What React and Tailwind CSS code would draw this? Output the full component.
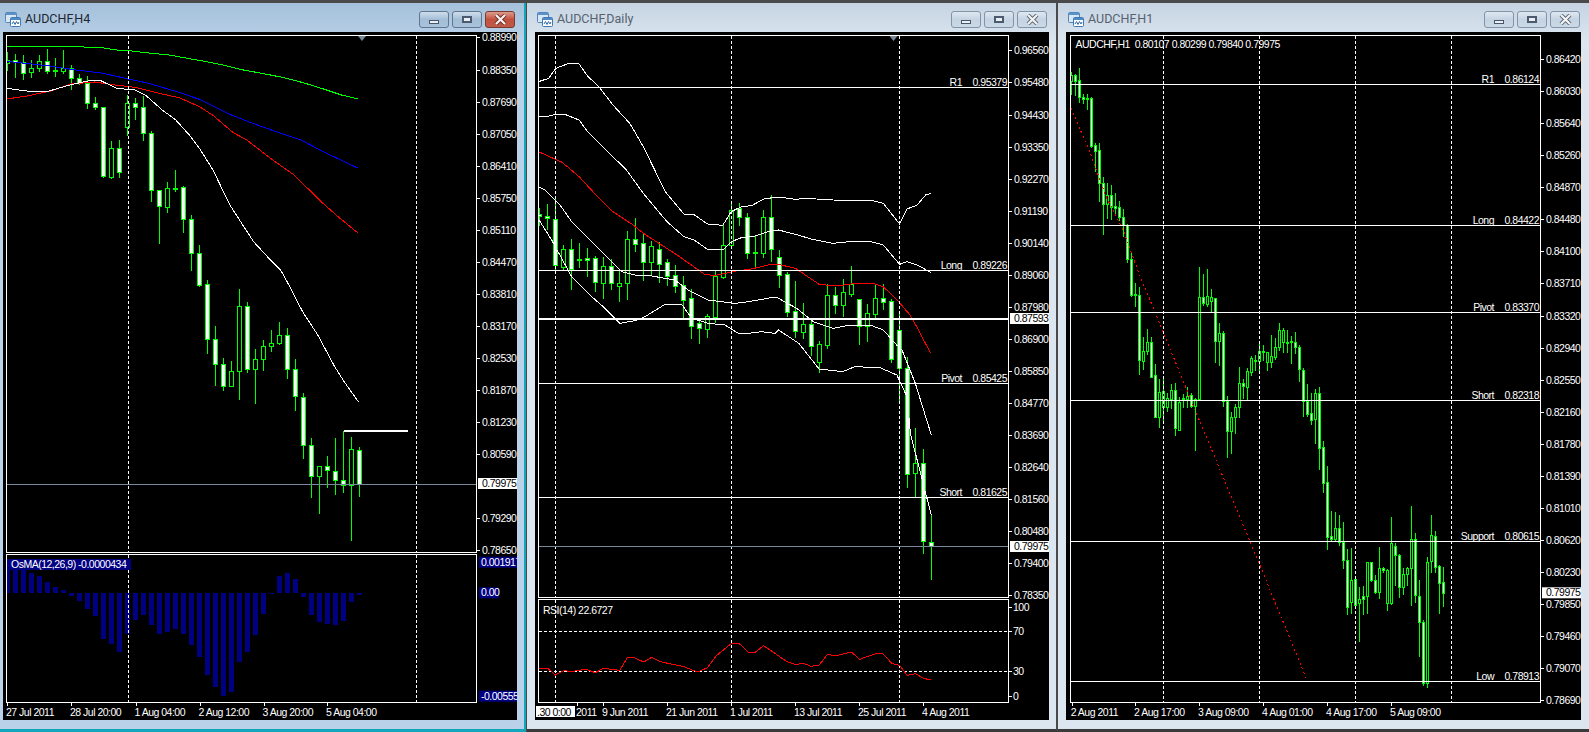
// MT4 style chart windows. Chart data is kept in page pixels (read off the chart)
const GREEN = '#00ff00'

// zoomed readings -> page pixels
const d3 = (pts) => pts.map(([x, y]) => [525 + x / 2.958, y / 3])
const d4 = (pts) => pts.map(([x, y]) => [525 + x / 2.958, 300 + y / 3])
const d11 = (pts) => pts.map(([x, y]) => [535 + x / 3, 190 + y / 3])
const d12 = (pts) => pts.map(([x, y]) => [770 + x / 3, 190 + y / 3])
const h4pt = (pts) => pts.map(([x, y]) => [x / 2.958, y / 3])
const h1pt = (pts) => pts.map(([x, y]) => [1055 + x / 2.936, y / 3])

// [high, bodyTop, bodyBottom, low, bearish]
const h4Candles = [
  [155, 180, 190, 210, 0], [162, 181, 187, 232, 1], [165, 187, 220, 236, 1], [181, 205, 217, 230, 0], [165, 182, 205, 212, 0],
  [147, 182, 212, 218, 1], [175, 210, 212, 228, 0], [150, 205, 212, 218, 0], [195, 205, 235, 268, 1], [222, 235, 248, 252, 1],
  [228, 248, 310, 323, 1], [292, 310, 322, 328, 1], [320, 322, 528, 532, 1], [424, 445, 530, 533, 0], [420, 445, 517, 530, 1],
  [285, 310, 380, 405, 0], [295, 310, 322, 357, 1], [288, 322, 400, 420, 1], [393, 400, 571, 602, 1], [571, 571, 619, 728, 1],
  [546, 565, 620, 636, 0], [510, 563, 566, 572, 1], [558, 562, 658, 696, 1], [645, 658, 760, 810, 1], [735, 758, 855, 857, 1],
  [840, 853, 1018, 1058, 1], [978, 1018, 1093, 1155, 1], [1075, 1091, 1157, 1170, 1], [1083, 1114, 1157, 1157, 0], [867, 919, 1114, 1196, 0],
  [906, 919, 1108, 1116, 1], [1047, 1078, 1108, 1208, 0], [1020, 1037, 1078, 1110, 0], [990, 1028, 1037, 1052, 0], [966, 1006, 1028, 1032, 0],
  [985, 1006, 1108, 1133, 1], [1077, 1108, 1189, 1229, 1], [1180, 1192, 1336, 1374, 1], [1314, 1336, 1429, 1490, 1], [1397, 1397, 1427, 1538, 0],
  [1368, 1397, 1411, 1460, 1], [1314, 1412, 1441, 1481, 1], [1294, 1441, 1456, 1475, 1], [1312, 1348, 1456, 1619, 0], [1341, 1351, 1453, 1487, 1],
]

const dailyCandles = [
  [55, 71, 79, 105, 1], [42, 79, 85, 118, 1], [18, 88, 226, 248, 1], [165, 178, 231, 238, 0], [148, 178, 236, 296, 1],
  [158, 208, 208, 232, 0], [175, 205, 209, 258, 1], [198, 205, 275, 303, 1], [202, 229, 278, 323, 0], [208, 229, 278, 297, 1],
  [236, 278, 287, 332, 0], [123, 148, 278, 326, 0], [85, 148, 161, 183, 1], [130, 160, 215, 270, 1], [153, 169, 215, 252, 0],
  [157, 178, 221, 275, 1], [208, 217, 258, 285, 1], [225, 256, 287, 305, 1], [258, 286, 329, 388, 1], [296, 325, 407, 444, 1],
  [390, 400, 415, 458, 1], [372, 379, 416, 441, 0], [242, 259, 381, 395, 0], [100, 166, 260, 263, 0], [33, 61, 166, 166, 0],
  [40, 55, 80, 105, 1], [70, 80, 188, 204, 1], [138, 186, 188, 232, 0], [60, 82, 188, 200, 0], [15, 82, 178, 213, 1],
  [180, 202, 254, 290, 1], [246, 253, 365, 378, 1], [273, 364, 422, 442, 1], [340, 403, 425, 443, 0], [390, 403, 467, 494, 1],
  [453, 463, 515, 545, 0], [282, 316, 464, 473, 0], [292, 316, 344, 368, 1], [267, 307, 344, 378, 0], [228, 283, 311, 318, 0],
  [328, 328, 407, 462, 1], [342, 370, 407, 453, 0], [283, 325, 371, 387, 0], [282, 325, 335, 358, 1], [327, 333, 506, 515, 1],
  [363, 421, 535, 639, 1], [502, 535, 853, 890, 1], [715, 818, 850, 922, 0], [778, 818, 1054, 1090, 1], [975, 1055, 1069, 1168, 1],
]

const h1Top = [
  [215, 225, 243, 282, 0], [222, 226, 243, 285, 1], [205, 240, 292, 305, 1], [282, 292, 298, 310, 1], [282, 294, 297, 326, 1],
  [292, 295, 438, 442, 1], [428, 436, 452, 512, 1], [430, 451, 548, 602, 1], [532, 550, 613, 702, 1], [549, 586, 613, 654, 0],
  [555, 586, 620, 657, 1], [580, 619, 623, 640, 1], [603, 622, 650, 660, 1], [627, 650, 675, 708, 1], [672, 675, 778, 785, 1],
  [756, 778, 884, 888, 1], [850, 883, 886, 918, 1], [862, 884, 1080, 1122, 1],
]
const h1Rest = [
  [112, 152, 182, 208, 0], [88, 127, 152, 162, 0], [112, 127, 230, 232, 1], [193, 226, 350, 352, 1], [238, 277, 350, 380, 0],
  [238, 274, 320, 365, 0], [280, 295, 320, 333, 0], [252, 270, 297, 325, 0], [250, 270, 383, 405, 1], [292, 307, 389, 389, 0],
  [282, 295, 297, 320, 1], [262, 287, 298, 320, 0], [280, 286, 318, 322, 1], [295, 297, 318, 450, 0], [-100, -10, 297, 300, 0],
  [-78, -10, 10, 15, 1], [-93, -12, 12, 18, 0], [-33, -10, 3, 33, 0], [-5, -5, 122, 185, 1], [70, 100, 122, 195, 0],
  [93, 100, 304, 318, 1], [288, 303, 392, 470, 1], [335, 352, 392, 458, 0], [312, 322, 352, 398, 0], [200, 250, 322, 352, 0],
  [238, 250, 257, 295, 1], [205, 214, 260, 297, 0], [168, 174, 215, 225, 0], [165, 179, 182, 210, 1], [122, 152, 182, 212, 0],
  [135, 152, 157, 180, 1], [155, 157, 185, 210, 0], [105, 168, 185, 200, 0], [115, 142, 170, 177, 0], [70, 91, 142, 150, 0],
  [85, 90, 127, 155, 0], [90, 126, 130, 155, 1], [108, 124, 127, 190, 1], [97, 125, 142, 160, 1], [135, 142, 208, 243, 1],
  [205, 210, 304, 348, 1], [252, 304, 342, 347, 1], [280, 340, 360, 372, 1], [268, 280, 358, 430, 0], [260, 280, 444, 508, 1],
  [424, 442, 548, 576, 1], [498, 545, 712, 746, 1], [633, 708, 716, 720, 1], [635, 684, 716, 722, 0], [645, 684, 726, 735, 1],
  [667, 726, 780, 803, 1], [747, 780, 922, 942, 1], [745, 840, 906, 938, 0], [835, 838, 914, 918, 1], [860, 898, 910, 1022, 0],
  [857, 889, 898, 942, 1], [785, 787, 888, 938, 0], [785, 787, 840, 843, 1], [825, 840, 875, 880, 1], [742, 805, 875, 893, 0],
  [800, 805, 810, 815, 1], [808, 810, 910, 930, 0], [652, 730, 910, 912, 0], [730, 737, 766, 855, 1], [762, 765, 862, 890, 1],
  [805, 822, 862, 883, 0], [800, 805, 823, 855, 0], [618, 718, 805, 915, 0], [700, 718, 886, 905, 1], [840, 888, 966, 1068, 1],
  [960, 966, 1150, 1155, 1], [770, 787, 1150, 1160, 0], [645, 706, 782, 815, 0], [692, 709, 800, 815, 1], [795, 798, 848, 938, 1],
  [800, 847, 880, 918, 1],
]
const h1Candles = [...h1Top, ...h1Rest.map((c) => c.map((v, i) => (i === 4 ? v : v + 900)))]

const h4Lines = [
  { color: '#00ff00', pts: h4pt([[20, 139], [155, 139], [295, 142], [345, 150], [390, 153], [440, 159], [500, 165], [560, 176], [600, 183], [660, 195], [720, 210], [780, 221], [840, 233], [900, 249], [960, 268], [1010, 285], [1060, 297]]) },
  { color: '#0000ff', pts: h4pt([[20, 184], [140, 197], [225, 210], [300, 219], [380, 237], [440, 250], [520, 274], [590, 298], [680, 343], [740, 367], [800, 389], [890, 420], [960, 457], [1060, 505]]) },
  { color: '#ff0000', pts: h4pt([[20, 297], [80, 288], [150, 273], [210, 252], [280, 246], [340, 255], [400, 262], [470, 280], [530, 293], [590, 320], [630, 346], [690, 398], [730, 420], [800, 475], [870, 525], [950, 605], [1000, 650], [1060, 700]]) },
  { color: '#ffffff', pts: h4pt([[20, 265], [80, 273], [145, 273], [210, 254], [270, 241], [300, 243], [345, 265], [400, 270], [430, 285], [480, 330], [520, 360], [560, 405], [590, 445], [630, 510], [680, 615], [750, 725], [800, 780], [830, 810], [860, 865], [895, 935], [940, 1005], [990, 1100], [1020, 1148], [1060, 1205]]) },
]

const dailyLines = [
  { color: '#ffffff', pts: d3([[40, 245], [70, 235], [91, 205], [130, 190], [160, 192], [185, 228], [220, 262], [260, 315], [310, 370], [350, 440], [415, 575], [470, 642], [500, 644], [540, 672], [585, 676], [610, 635], [640, 620], [670, 617], [710, 595], [760, 592], [800, 598], [830, 595], [910, 600], [1025, 601], [1060, 610], [1108, 672], [1130, 627], [1160, 615], [1185, 585], [1200, 580]]) },
  { color: '#ffffff', pts: d3([[40, 348], [60, 351], [90, 343], [120, 344], [160, 360], [185, 395], [250, 460], [300, 510], [350, 580], [420, 665], [470, 710], [500, 720], [540, 748], [585, 750], [610, 725], [640, 713], [680, 708], [720, 695], [750, 690], [800, 703], [850, 718], [910, 730], [960, 725], [1020, 724], [1060, 735], [1108, 793], [1130, 785], [1160, 795], [1200, 817]]) },
  { color: '#ffffff', pts: [...d11([[10, -10], [30, 0], [75, 45], [110, 95], [140, 125], [200, 185], [260, 245], [300, 255], [350, 258], [420, 270], [460, 300], [520, 330], [560, 335], [600, 340], [640, 335], [700, 325]]), ...d12([[0, 322], [20, 322], [80, 355], [130, 395], [190, 415], [240, 405], [300, 405], [340, 420], [380, 465], [396, 480], [436, 580], [484, 735]])] },
  { color: '#ffffff', pts: [...d11([[12, 90], [50, 150], [110, 260], [170, 320], [210, 355], [255, 400], [300, 392], [330, 380], [390, 343], [440, 343], [470, 385], [520, 400], [570, 405], [610, 430], [640, 430], [680, 425], [720, 430]]), ...d4([[750, 90], [810, 130], [870, 207], [940, 215], [975, 200], [1050, 203], [1100, 225], [1130, 290], [1140, 400], [1180, 560], [1202, 645]])] },
  { color: '#ff0000', pts: [...d3([[40, 455], [110, 487], [160, 530], [210, 585], [260, 635], [320, 675], [350, 700], [450, 765], [530, 822], [560, 827], [630, 812], [665, 808], [720, 795], [745, 792], [800, 805], [870, 853], [920, 858], [980, 850], [1030, 850], [1060, 860], [1100, 900]]), ...d12([[390, 340], [420, 375], [440, 410], [482, 490]])] },
]

const rsiLine = d4([[40, 1105], [68, 1106], [90, 1125], [115, 1111], [135, 1115], [180, 1108], [208, 1118], [232, 1105], [280, 1111], [303, 1072], [325, 1074], [351, 1086], [375, 1072], [400, 1085], [470, 1100], [510, 1116], [540, 1103], [565, 1068], [611, 1030], [635, 1032], [660, 1056], [682, 1056], [706, 1037], [775, 1085], [800, 1094], [822, 1090], [847, 1099], [870, 1095], [895, 1063], [918, 1068], [965, 1056], [990, 1078], [1040, 1060], [1060, 1062], [1085, 1090], [1108, 1096], [1130, 1126], [1155, 1121], [1180, 1136], [1202, 1139]])

const h1Trend = [...h1pt([[47, 325], [100, 450], [150, 590], [200, 690], [250, 830], [275, 890]]), [1150, 300], [1196.3, 413], [1259, 563], [1307, 680]]

// bar end y for each OsMA bar, zero line at 999
const osmaBars = [918, 918, 918, 940, 948, 966, 982, 990, 1007, 1024, 1047, 1068, 1138, 1152, 1176, 1121, 1080, 1066, 1096, 1122, 1116, 1108, 1122, 1156, 1192, 1246, 1281, 1308, 1296, 1206, 1176, 1126, 1062, 1001, 948, 940, 957, 1011, 1066, 1086, 1092, 1096, 1084, 1026, 1005]

const label = "font-['Liberation_Sans',Arial,sans-serif] text-[10.5px] tracking-[-0.5px]"

function Candles({ data, x0, step, half }) {
  return data.map(([hi, top, bot, lo, bear], i) => {
    const x = x0 + step * i
    const t = Math.round(top / 3)
    const b = Math.round(bot / 3)
    return (
      <g key={i} shapeRendering="crispEdges">
        <line x1={x} x2={x} y1={Math.round(hi / 3)} y2={Math.round(lo / 3) + 1} stroke={GREEN} />
        <rect x={x - half} y={t + 0.5} width={half * 2} height={Math.max(b - t, 1)} fill={bear ? '#fff' : '#000'} stroke={GREEN} />
      </g>
    )
  })
}

function Poly({ pts, color = '#fff', dash }) {
  return <polyline points={pts.map((p) => p.join(',')).join(' ')} fill="none" stroke={color} strokeDasharray={dash} shapeRendering="crispEdges" />
}

function VLines({ xs, y1, y2 }) {
  return xs.map((x) => <line key={x} x1={x} x2={x} y1={y1} y2={y2} stroke="#fff" strokeDasharray="3 2" shapeRendering="crispEdges" />)
}

function Level({ y, name, value, x1, x2, nameEnd, valueEnd, width = 1, color = '#fff' }) {
  return (
    <g>
      <line x1={x1} x2={x2} y1={y} y2={y} stroke={color} strokeWidth={width} shapeRendering="crispEdges" />
      {name && <text x={nameEnd} y={y - 2} textAnchor="end" fill="#fff" className={label}>{name}</text>}
      {value && <text x={valueEnd} y={y - 2} textAnchor="end" fill="#fff" className={label}>{value}</text>}
    </g>
  )
}

function Marker({ x, y = 36 }) {
  return <polygon points={`${x - 4},${y} ${x + 4},${y} ${x},${y + 5}`} fill="#778899" />
}

// pane with white frame, svg uses page pixels through the viewBox
function Pane({ x, y, h, children }) {
  return (
    <div className="border border-white w-[471px] bg-black" style={{ height: h }}>
      <svg width={469} height={h - 2} viewBox={`${x + 1} ${y + 1} 469 ${h - 2}`} className="block">
        {children}
      </svg>
    </div>
  )
}

function PriceAxis({ x, y, h, rows, textX }) {
  return (
    <svg width={40} height={h} viewBox={`${x} ${y} 40 ${h}`} className="block shrink-0 overflow-visible">
      {rows.map(({ v, at, box, navy, w }) => (
        <g key={v}>
          {!box && !navy && <line x1={x} x2={x + 3} y1={Math.round(at) + 0.5} y2={Math.round(at) + 0.5} stroke="#fff" shapeRendering="crispEdges" />}
          {box && <rect x={x + 1} y={at - 5} width={39} height={11} fill="#fff" />}
          {navy && <rect x={x + 2} y={at - 5} width={w} height={11} fill="#000080" />}
          <text x={textX} y={at + 4} fill={box ? '#000' : '#fff'} className={label}>{v}</text>
        </g>
      ))}
    </svg>
  )
}

function TimeAxis({ x, ticks, children }) {
  return (
    <svg width={510} height={17} viewBox={`${x} 703 510 17`} className="block overflow-visible">
      {ticks.map(([tx, text]) => (
        <g key={text}>
          <line x1={Math.round(tx) + 1.5} x2={Math.round(tx) + 1.5} y1={703} y2={706} stroke="#fff" shapeRendering="crispEdges" />
          <text x={tx} y={716} fill="#fff" className={label}>{text}</text>
        </g>
      ))}
      {children}
    </svg>
  )
}

function ChartIcon() {
  return (
    <svg width="16" height="15" viewBox="0 0 16 15" className="shrink-0">
      <rect x="0.5" y="0.5" width="11" height="10" rx="1" fill="#d9e6f3" stroke="#4f86bd" />
      <rect x="1" y="1" width="10" height="2" fill="#5b93c9" />
      <rect x="5.5" y="5.5" width="10" height="9" rx="1" fill="#fff" stroke="#3f78b3" />
      <rect x="6" y="6" width="9" height="2" fill="#4f8ac4" />
      <path d="M7 12 L8.5 9.5 L10 12.5 L11.5 9.5 L13 12 L14 10" fill="none" stroke="#2f6cab" />
    </svg>
  )
}

function WinButton({ kind, active }) {
  const close = kind === 'close' && active
  return (
    <div
      className={`w-[30px] h-[17px] rounded-[3px] border flex items-center justify-center ${
        close
          ? 'border-[#7a3a34] bg-gradient-to-b from-[#dc9a8e] via-[#c2503f] to-[#c05a48]'
          : active
            ? 'border-[#5f7690] bg-gradient-to-b from-[#cfdeec] via-[#a3bdd6] to-[#a9c3db]'
            : 'border-[#8294a8] bg-gradient-to-b from-[#dfe8f1] via-[#c5d4e2] to-[#cbd9e6]'
      }`}
    >
      {kind === 'min' && <div className="w-[10px] h-[4px] mt-[5px] bg-[#e9eff5] border border-[#47566a]" />}
      {kind === 'max' && <div className="w-[10px] h-[7px] border-2 border-[#4b5a6e] bg-[#e9eff5]" />}
      {kind === 'close' && (
        <svg width="13" height="11" viewBox="0 0 13 11">
          <path d="M2 1 L11 10 M11 1 L2 10" stroke={close ? '#6d2e28' : '#56667a'} strokeWidth="4" />
          <path d="M2 1 L11 10 M11 1 L2 10" stroke="#f6f3f1" strokeWidth="2.2" />
        </svg>
      )}
    </div>
  )
}

function ChartWindow({ title, active, className, titlePad, bodyPad, children }) {
  return (
    <section className={`flex flex-col h-[729px] mt-[3px] border-b-[3px] ${className}`}>
      <header className={`h-[29px] shrink-0 flex items-center pt-[4px] pr-[9px] ${titlePad}`}>
        <ChartIcon />
        <span className={`ml-[4px] text-[12.5px] font-['Roboto',sans-serif] ${active ? 'text-[#1c2733]' : 'text-[#56626e]'}`}>{title}</span>
        <div className="ml-auto flex gap-[3px]">
          <WinButton kind="min" active={active} />
          <WinButton kind="max" active={active} />
          <WinButton kind="close" active={active} />
        </div>
      </header>
      <div className={`h-[688px] bg-black pt-[3px] flex flex-col overflow-hidden ${bodyPad}`}>{children}</div>
    </section>
  )
}

const h4Axis = [
  [37, '0.88990'], [69.5, '0.88350'], [101.5, '0.87690'], [133.5, '0.87050'], [165.5, '0.86410'], [198, '0.85750'], [230, '0.85110'], [262, '0.84470'],
  [293.7, '0.83810'], [325.7, '0.83170'], [357.7, '0.82530'], [389.7, '0.81870'], [421.7, '0.81230'], [453.7, '0.80590'], [483, '0.79975', 1], [517.7, '0.79290'], [549.5, '0.78650'],
].map(([at, v, box]) => ({ at, v, box }))

const dailyAxis = [
  [50.3, '0.96560'], [82, '0.95480'], [114.7, '0.94430'], [146.7, '0.93350'], [178.7, '0.92270'], [210.7, '0.91190'], [242.7, '0.90140'], [274.7, '0.89060'], [306.7, '0.87980'],
  [318, '0.87593', 1], [338.7, '0.86900'], [370.7, '0.85850'], [402.7, '0.84770'], [434.7, '0.83690'], [466.7, '0.82640'], [498.7, '0.81560'], [530.7, '0.80480'], [546, '0.79975', 1], [562.7, '0.79400'], [594.7, '0.78350'],
].map(([at, v, box]) => ({ at, v, box }))

const h1Axis = [
  [59.3, '0.86420'], [91.3, '0.86030'], [123.3, '0.85640'], [155.3, '0.85260'], [187.3, '0.84870'], [219.3, '0.84480'], [251.3, '0.84100'], [283.3, '0.83710'], [315.7, '0.83320'], [347.7, '0.82940'], [379.7, '0.82550'],
  [411.7, '0.82160'], [443.7, '0.81780'], [475.7, '0.81390'], [507.7, '0.81010'], [539.7, '0.80620'], [571.7, '0.80230'], [592.3, '0.79975', 1], [603.7, '0.79850'], [635.7, '0.79460'], [667.7, '0.79070'], [699.7, '0.78690'],
].map(([at, v, box]) => ({ at, v, box }))

export default function App() {
  return (
    <div className="w-[1589px] h-[732px] bg-[#4a4a4a] flex overflow-hidden">
      {/* H4, the active window */}
      <ChartWindow
        title="AUDCHF,H4"
        active
        titlePad="pl-[5px]"
        bodyPad="w-[514px] ml-[3px] pl-[3px]"
        className="w-[526px] mr-[1px] border-r-2 border-[#12a6ba] bg-gradient-to-b from-[#a5c0da] to-[#bad2e9] [background-size:100%_40px] bg-no-repeat bg-[#bad2e9]"
      >
        <div className="flex">
          <Pane x={6} y={35} h={518}>
            <Candles data={h4Candles} x0={7.5} step={8} half={2} />
            {h4Lines.map((l) => <Poly key={l.color} pts={l.pts} color={l.color} />)}
            <VLines xs={[128.5, 416.5]} y1={36} y2={552} />
            <Marker x={362} />
            <line x1={344} x2={408} y1={431} y2={431} stroke="#fff" strokeWidth="2" shapeRendering="crispEdges" />
            <Level y={484.5} x1={7} x2={476} color="#778899" />
          </Pane>
          <PriceAxis x={477} y={35} h={518} textX={482} rows={h4Axis} />
        </div>
        <div className="flex mt-[1px]">
          <Pane x={6} y={554} h={149}>
            {osmaBars.map((end, i) => {
              const y = 260 + end / 3
              const top = Math.min(y, 593)
              return <rect key={i} x={5 + 8 * i} y={top} width={5} height={Math.abs(y - 593)} fill="#000080" shapeRendering="crispEdges" />
            })}
            <VLines xs={[128.5, 416.5]} y1={555} y2={702} />
            <rect x={7} y={559} width={124} height={11} fill="#000080" />
            <text x={11} y={568} fill="#fff" className={label}>OsMA(12,26,9) -0.0000434</text>
          </Pane>
          <PriceAxis
            x={477}
            y={554}
            h={149}
            textX={481}
            rows={[
              { at: 561.7, v: '0.001917', navy: true, w: 38 },
              { at: 592.3, v: '0.00', navy: true, w: 20 },
              { at: 695.7, v: '-0.00555', navy: true, w: 38 },
            ]}
          />
        </div>
        <TimeAxis x={6} ticks={[[6, '27 Jul 2011'], [70, '28 Jul 20:00'], [134.5, '1 Aug 04:00'], [198.5, '2 Aug 12:00'], [262.5, '3 Aug 20:00'], [326, '5 Aug 04:00']]} />
      </ChartWindow>

      {/* Daily */}
      <ChartWindow
        title="AUDCHF,Daily"
        titlePad="pl-[10px]"
        bodyPad="w-[514px] ml-[8px] pl-[3px]"
        className="w-[531px] bg-[#dbe6f0] border-r-2 border-r-[#4a4a4a] border-b-[#3a3a3a] bg-gradient-to-b from-[#c6d4e2] to-[#dbe6f0] [background-size:100%_40px] bg-no-repeat"
      >
        <div className="flex">
          <Pane x={538} y={35} h={563}>
            <Candles data={dailyCandles.map(([a, b, c, d, e]) => [a + 570, b + 570, c + 570, d + 570, e])} x0={539.5} step={8} half={2} />
            {dailyLines.map((l, i) => <Poly key={i} pts={l.pts} color={l.color} />)}
            <VLines xs={[555.5, 731.5, 899.5]} y1={36} y2={597} />
            <Marker x={893.5} />
            <Level y={87.5} name="R1" value="0.95379" x1={539} x2={1008} nameEnd={962} valueEnd={1007} />
            <Level y={270.5} name="Long" value="0.89226" x1={539} x2={1008} nameEnd={962} valueEnd={1007} />
            <Level y={319} x1={539} x2={1008} width={2} />
            <Level y={383.5} name="Pivot" value="0.85425" x1={539} x2={1008} nameEnd={962} valueEnd={1007} />
            <Level y={497.5} name="Short" value="0.81625" x1={539} x2={1008} nameEnd={962} valueEnd={1007} />
            <Level y={546.5} x1={539} x2={1008} color="#778899" />
          </Pane>
          <PriceAxis x={1009} y={35} h={563} textX={1014} rows={dailyAxis} />
        </div>
        <div className="flex mt-[1px]">
          <Pane x={538} y={599} h={104}>
            <line x1={539} x2={1008} y1={631.5} y2={631.5} stroke="#fff" strokeDasharray="3 2" shapeRendering="crispEdges" />
            <line x1={539} x2={1008} y1={671.5} y2={671.5} stroke="#fff" strokeDasharray="3 2" shapeRendering="crispEdges" />
            <VLines xs={[555.5, 731.5, 899.5]} y1={600} y2={702} />
            <Poly pts={rsiLine} color="#ff0000" />
            <text x={543} y={613.5} fill="#fff" className={label}>RSI(14) 22.6727</text>
          </Pane>
          <PriceAxis
            x={1009}
            y={599}
            h={104}
            textX={1013}
            rows={[{ at: 606.7, v: '100' }, { at: 630.7, v: '70' }, { at: 670.7, v: '30' }, { at: 695.7, v: '0' }]}
          />
        </div>
        <TimeAxis x={538} ticks={[[576, '2011'], [602, '9 Jun 2011'], [666, '21 Jun 2011'], [730, '1 Jul 2011'], [794, '13 Jul 2011'], [858, '25 Jul 2011'], [922, '4 Aug 2011']]}>
          <rect x={536} y={706} width={39} height={11} fill="#fff" />
          <text x={537} y={716} fill="#000" className={label}>.30 0:00</text>
        </TimeAxis>
      </ChartWindow>

      {/* H1 */}
      <ChartWindow
        title="AUDCHF,H1"
        titlePad="pl-[10px]"
        bodyPad="w-[515px] ml-[8px] pl-[4px]"
        className="w-[531px] bg-[#dbe6f0] border-b-[#3a3a3a] bg-gradient-to-b from-[#c6d4e2] to-[#dbe6f0] [background-size:100%_40px] bg-no-repeat"
      >
        <div className="flex">
          <Pane x={1070} y={35} h={668}>
            <Candles data={h1Candles} x0={1071.5} step={4} half={1} />
            <Poly pts={h1Trend} color="#ff0000" dash="2 3" />
            <VLines xs={[1163.5, 1259.5, 1355.5, 1451.5]} y1={36} y2={702} />
            <Level y={84.5} name="R1" value="0.86124" x1={1071} x2={1540} nameEnd={1494} valueEnd={1539} />
            <Level y={225.5} name="Long" value="0.84422" x1={1071} x2={1540} nameEnd={1494} valueEnd={1539} />
            <Level y={312.5} name="Pivot" value="0.83370" x1={1071} x2={1540} nameEnd={1494} valueEnd={1539} />
            <Level y={400.5} name="Short" value="0.82318" x1={1071} x2={1540} nameEnd={1494} valueEnd={1539} />
            <Level y={541.5} name="Support" value="0.80615" x1={1071} x2={1540} nameEnd={1494} valueEnd={1539} />
            <Level y={681.5} name="Low" value="0.78913" x1={1071} x2={1540} nameEnd={1494} valueEnd={1539} />
            <text x={1075.5} y={47.5} fill="#fff" className={label} xmlSpace="preserve">AUDCHF,H1  0.80107 0.80299 0.79840 0.79975</text>
          </Pane>
          <PriceAxis x={1541} y={35} h={668} textX={1546} rows={h1Axis} />
        </div>
        <TimeAxis x={1070} ticks={[[1070.7, '2 Aug 2011'], [1134, '2 Aug 17:00'], [1198, '3 Aug 09:00'], [1262, '4 Aug 01:00'], [1326, '4 Aug 17:00'], [1390, '5 Aug 09:00']]} />
      </ChartWindow>
    </div>
  )
}
